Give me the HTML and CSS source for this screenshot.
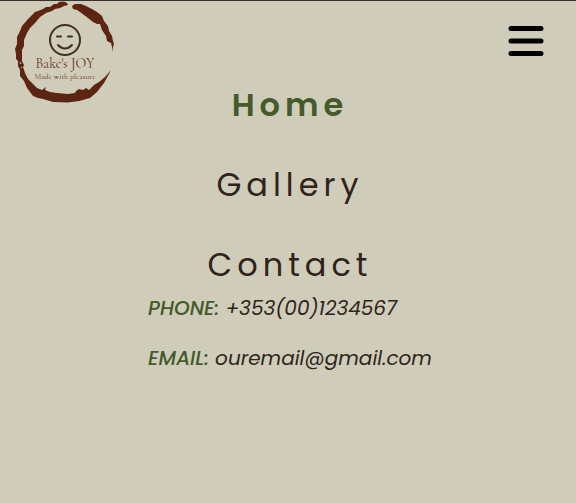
FILE: index.html
```html
<!DOCTYPE html>
<html lang="en">
<head>
<meta charset="utf-8">
<meta name="viewport" content="width=device-width, initial-scale=1">
<title>Bake's JOY</title>
<link rel="stylesheet" href="styles.css">
</head>
<body>
<header class="header">
  <a class="logo" href="#" aria-label="Bake's JOY">
    <svg width="104" height="104" viewBox="12 1 104 104">
      <g fill="#5e2412">
        <path d="M68 5L67 3L64 1.500L59 2L57 4L54 4L50 7L46 7L43 9L38 11L35 12L28 19L22 26L20 31L17 37L17 44L15 49L16 54L16 59L18 61L18 66L20 70L20 76L24 81L27 88L33 96L38 98L43 99L53 102L68 102.500L79 101L90 98L97 92L104 83L110 72L111 70L105 77L99 82L94 85L89 90L86 88L83 90L79 89L76 91L75 93L68 94L57 93L50 92L45 90L46 87L42 90L37 88L33 84L28 79L25 73L23 67L24 65L22 61L22 50L24 46L24 40L27 33L30 28L35 23L40 17L46 13L52 11L55 9L60 8L64 6Z"/>
        <path d="M72 6L75 4L81 4L86 6L92 9L97 12L102 16L104 21L108 26L109 31L112 36L113 41L114 44L113 47L113 52L112 47L111 43L107 41L106 36L102 30L100 24L97 24L93 22L88 18L84 15L80 12L77 10L73 9Z"/>
      </g>
      <path d="M20 62l1 2M21 67l1 1" stroke="#cfcdb9" fill="none"/>
      <g fill="none" stroke="#432c26" stroke-width="2" stroke-linecap="round">
        <circle cx="65" cy="40" r="15"/>
        <path d="M57 36.500h4M68 36.500h4M58 45q7 7 14 0"/>
      </g>
      <g class="logo-text" text-anchor="middle">
        <text class="logo-name" x="65" y="68">Bake's JOY</text>
        <text class="logo-tag" x="65" y="79">Made with pleasure</text>
      </g>
    </svg>
  </a>
  <button class="menu-button" type="button" aria-label="Close menu">
    <svg width="36" height="32" viewBox="0 0 36 32" fill="none" stroke="#000" stroke-width="5" stroke-linecap="round">
      <path d="M3 3.500H33M3 16H33M3 28.500H33"/>
    </svg>
  </button>
</header>
<main class="menu">
  <nav class="nav">
    <a class="nav-link active" href="#">Home</a>
    <a class="nav-link" href="#">Gallery</a>
    <a class="nav-link" href="#">Contact</a>
  </nav>
  <address class="contact">
    <p class="contact-line"><strong>PHONE:</strong> +353(00)1234567</p>
    <p class="contact-line"><strong>EMAIL:</strong> ouremail@gmail.com</p>
  </address>
</main>
</body>
</html>
```
FILE: styles.css
```css
* {
  box-sizing: border-box;
}

body {
  margin: 0;
  min-height: 100vh;
  border-top: 1px solid #37302f;
  background: #cfcdb9;
  color: #2f231b;
  font-family: Poppins, Inter, sans-serif;
}

.header {
  display: flex;
  justify-content: space-between;
  align-items: flex-start;
  height: 80px;
  padding: 0 32px 0 12px;
}

.logo svg,
.menu-button svg {
  display: block;
}

.logo-text {
  fill: #672f20;
  font-family: "Cormorant Garamond", "Liberation Serif", serif;
}

.logo-name {
  font-size: 14px;
}

.logo-tag {
  font-size: 8px;
}

.menu-button {
  margin-top: 24px;
  padding: 0;
  border: 0;
  background: none;
  cursor: pointer;
}

.menu {
  padding-left: 4px;
}

.nav {
  display: flex;
  flex-direction: column;
  align-items: center;
  gap: 32px;
}

.nav-link {
  color: inherit;
  font-size: 32px;
  font-weight: 400;
  line-height: 48px;
  letter-spacing: 5px;
  text-decoration: none;
}

.nav-link.active {
  color: #445a2a;
  font-weight: 600;
}

.contact {
  display: flex;
  flex-direction: column;
  gap: 20px;
  width: fit-content;
  margin: 4px auto 0;
  font-size: 20px;
  font-style: italic;
  line-height: 30px;
}

.contact-line {
  margin: 0;
}

.contact strong {
  color: #445a2a;
  font-weight: 500;
}
```
